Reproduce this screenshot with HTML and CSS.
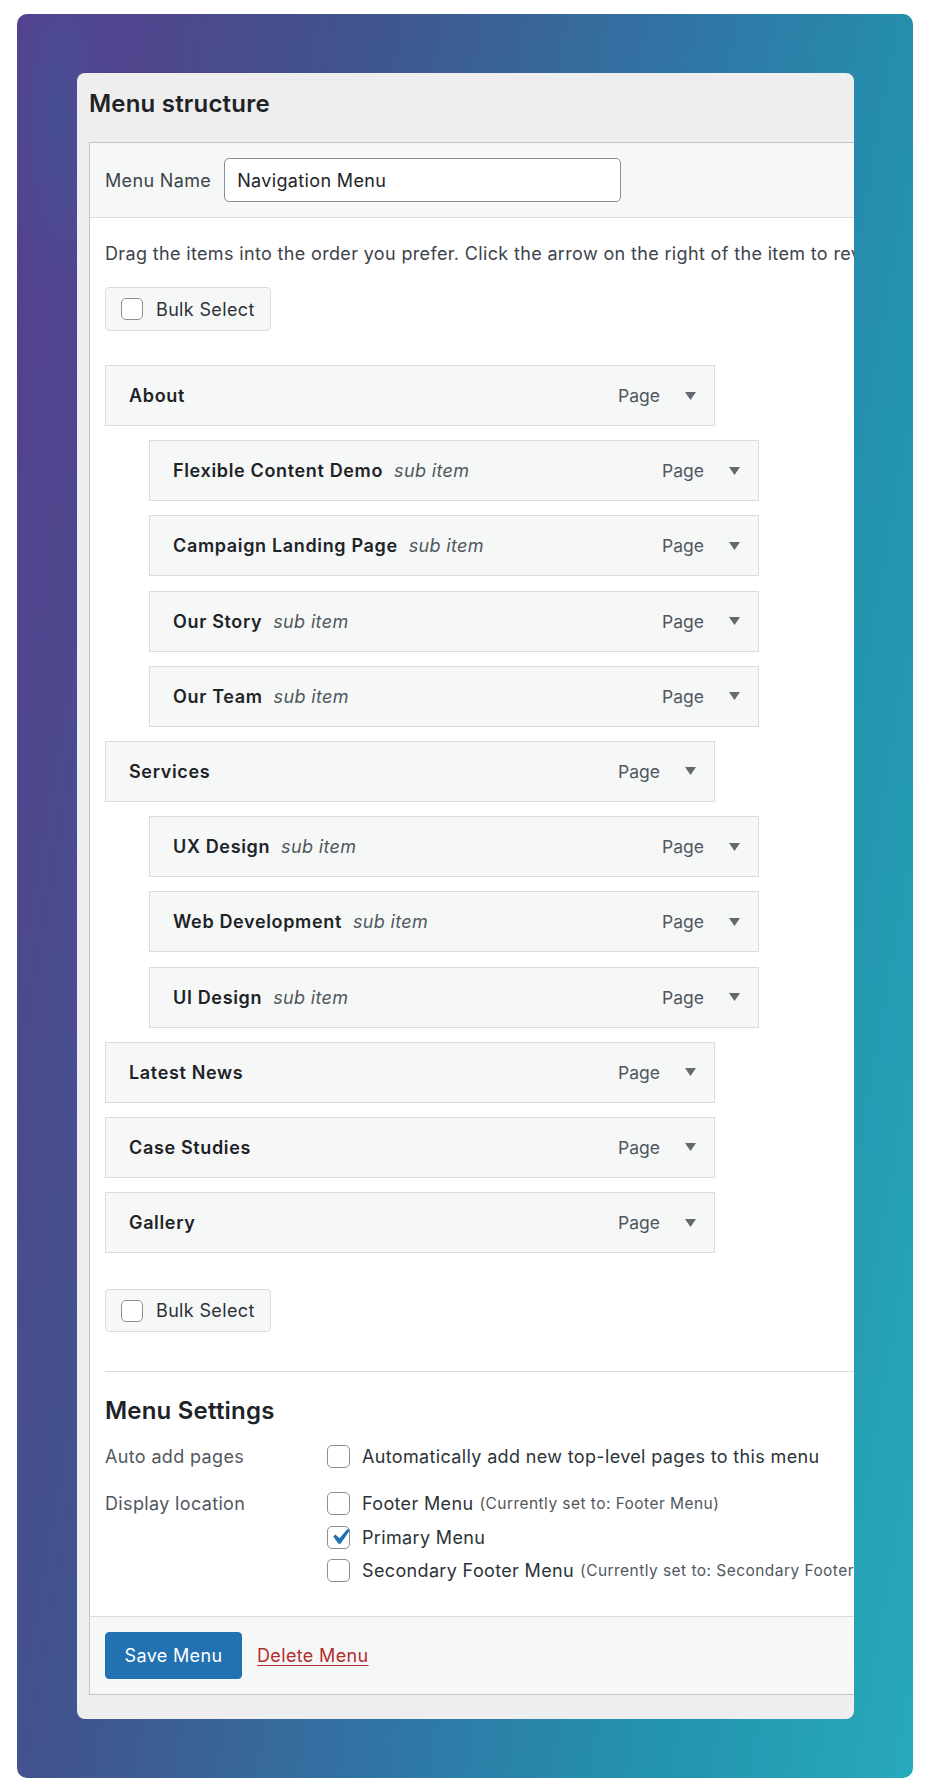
FILE: index.html
```html
<!DOCTYPE html>
<html lang="en">
<head>
<meta charset="utf-8">
<title>Menu structure</title>
<link rel="stylesheet" href="styles.css">
</head>
<body>
<div class="frame">
  <div class="card">
    <h2 class="card-title">Menu structure</h2>
    <div class="panel">
      <div class="panel-head">
        <label class="name-label" for="menu-name">Menu Name</label>
        <input class="name-input" id="menu-name" type="text" value="Navigation Menu">
      </div>
      <div class="panel-body">
        <p class="intro">Drag the items into the order you prefer. Click the arrow on the right of the item to reveal additional configuration options.</p>
        <div class="bulk"><span class="cb"></span><span>Bulk Select</span></div>

        <ul class="items">
          <li class="item"><span class="item-title">About</span><span class="item-type">Page</span><svg class="arrow" viewBox="0 0 11 8"><polygon points="0,0 11,0 5.5,8"/></svg></li>
          <li class="item sub"><span class="item-title">Flexible Content Demo</span><span class="item-note">sub item</span><span class="item-type">Page</span><svg class="arrow" viewBox="0 0 11 8"><polygon points="0,0 11,0 5.5,8"/></svg></li>
          <li class="item sub"><span class="item-title">Campaign Landing Page</span><span class="item-note">sub item</span><span class="item-type">Page</span><svg class="arrow" viewBox="0 0 11 8"><polygon points="0,0 11,0 5.5,8"/></svg></li>
          <li class="item sub"><span class="item-title">Our Story</span><span class="item-note">sub item</span><span class="item-type">Page</span><svg class="arrow" viewBox="0 0 11 8"><polygon points="0,0 11,0 5.5,8"/></svg></li>
          <li class="item sub"><span class="item-title">Our Team</span><span class="item-note">sub item</span><span class="item-type">Page</span><svg class="arrow" viewBox="0 0 11 8"><polygon points="0,0 11,0 5.5,8"/></svg></li>
          <li class="item"><span class="item-title">Services</span><span class="item-type">Page</span><svg class="arrow" viewBox="0 0 11 8"><polygon points="0,0 11,0 5.5,8"/></svg></li>
          <li class="item sub"><span class="item-title">UX Design</span><span class="item-note">sub item</span><span class="item-type">Page</span><svg class="arrow" viewBox="0 0 11 8"><polygon points="0,0 11,0 5.5,8"/></svg></li>
          <li class="item sub"><span class="item-title">Web Development</span><span class="item-note">sub item</span><span class="item-type">Page</span><svg class="arrow" viewBox="0 0 11 8"><polygon points="0,0 11,0 5.5,8"/></svg></li>
          <li class="item sub"><span class="item-title">UI Design</span><span class="item-note">sub item</span><span class="item-type">Page</span><svg class="arrow" viewBox="0 0 11 8"><polygon points="0,0 11,0 5.5,8"/></svg></li>
          <li class="item"><span class="item-title">Latest News</span><span class="item-type">Page</span><svg class="arrow" viewBox="0 0 11 8"><polygon points="0,0 11,0 5.5,8"/></svg></li>
          <li class="item"><span class="item-title">Case Studies</span><span class="item-type">Page</span><svg class="arrow" viewBox="0 0 11 8"><polygon points="0,0 11,0 5.5,8"/></svg></li>
          <li class="item"><span class="item-title">Gallery</span><span class="item-type">Page</span><svg class="arrow" viewBox="0 0 11 8"><polygon points="0,0 11,0 5.5,8"/></svg></li>
        </ul>

        <div class="bulk bulk-bottom"><span class="cb"></span><span>Bulk Select</span></div>

        <div class="settings">
          <h3 class="settings-title">Menu Settings</h3>
          <div class="setting-row">
            <div class="setting-label">Auto add pages</div>
            <div class="setting-opts">
              <div class="opt"><span class="cb"></span><span>Automatically add new top-level pages to this menu</span></div>
            </div>
          </div>
          <div class="setting-row">
            <div class="setting-label">Display location</div>
            <div class="setting-opts">
              <div class="opt"><span class="cb"></span><span>Footer Menu</span><span class="opt-note">(Currently set to: Footer Menu)</span></div>
              <div class="opt"><span class="cb checked"><svg viewBox="0 0 20 20"><path d="M14.83 4.89l1.34.94-5.81 8.38H9.02L5.78 9.67l1.34-1.25 2.57 2.4z"/></svg></span><span>Primary Menu</span></div>
              <div class="opt"><span class="cb"></span><span>Secondary Footer Menu</span><span class="opt-note">(Currently set to: Secondary Footer Menu)</span></div>
            </div>
          </div>
        </div>
      </div>
      <div class="panel-foot">
        <button class="save" type="button">Save Menu</button>
        <a class="delete" href="#">Delete Menu</a>
      </div>
    </div>
  </div>
</div>
</body>
</html>
```

FILE: styles.css
```css
* { box-sizing: border-box; }

html, body {
  margin: 0;
  padding: 0;
  background: #ffffff;
}

body {
  font-family: Inter, "Noto Sans", "Liberation Sans", sans-serif;
  font-size: 18px;
  letter-spacing: 0.35px;
  color: #1d2327;
}

.frame {
  margin: 14px 0 0 17px;
  width: 896px;
  height: 1764px;
  border-radius: 10px;
  padding: 59px 59px 59px 60px;
  background:
    radial-gradient(ellipse 60px 200px at 40px 100px, rgba(60, 90, 150, 0.55), rgba(60, 90, 150, 0) 100%),
    linear-gradient(100deg, #583e8e 0%, #40558f 30%, #2f78a6 58%, #2393ae 78%, #28a9bb 100%);
}

.card {
  width: 777px;
  height: 1646px;
  background: #eeeeee;
  border-radius: 8px;
  overflow: hidden;
  padding: 0 0 23px 12px;
}

.card-title {
  margin: 0;
  padding: 17px 0 24px 0;
  font-size: 24px;
  line-height: 28px;
  letter-spacing: 0.2px;
  font-weight: 600;
  color: #1d2327;
  white-space: nowrap;
}

.panel {
  width: 840px;
  background: #ffffff;
  border: 1px solid #c3c4c7;
}

.panel-head {
  display: flex;
  align-items: center;
  height: 75px;
  padding: 0 15px;
  background: #f6f7f7;
  border-bottom: 1px solid #dcdcde;
}

.name-label {
  color: #3c434a;
  margin-right: 13px;
}

.name-input {
  width: 397px;
  height: 44px;
  border: 1px solid #8c8f94;
  border-radius: 5px;
  padding: 0 12px;
  font: inherit;
  letter-spacing: 0.35px;
  color: #1d2327;
  background: #ffffff;
}

.panel-body {
  padding: 23px 15px 34px 15px;
}

.intro {
  margin: 0 0 20px 0;
  line-height: 26px;
  color: #3c434a;
  white-space: nowrap;
}

.bulk {
  display: inline-flex;
  align-items: center;
  gap: 13px;
  height: 44px;
  width: 166px;
  padding: 0 15px;
  background: #f6f7f7;
  border: 1px solid #dcdcde;
  border-radius: 4px;
  color: #2c3338;
  white-space: nowrap;
}

.bulk-bottom {
  margin-top: 36px;
  height: 43px;
}

.cb {
  flex: none;
  display: inline-flex;
  align-items: center;
  justify-content: center;
  width: 22px;
  height: 22px;
  border: 1px solid #8c8f94;
  border-radius: 5px;
  background: #ffffff;
  overflow: visible;
}

.cb svg {
  flex: none;
  width: 32px;
  height: 32px;
  margin: 0 -5px 0 -3px;
  fill: #2271b1;
}

.items {
  list-style: none;
  margin: 34px 0 0 0;
  padding: 0;
  display: flex;
  flex-direction: column;
  gap: 14.2px;
}

.item {
  display: flex;
  align-items: center;
  width: 610px;
  height: 61px;
  padding: 0 18px 0 23px;
  background: #f6f7f7;
  border: 1px solid #dcdcde;
  white-space: nowrap;
}

.item.sub {
  margin-left: 44px;
}

.item-title {
  font-weight: 600;
  letter-spacing: 0.65px;
  color: #1d2327;
}

.item-note {
  margin-left: 11px;
  font-style: italic;
  font-size: 18px;
  color: #50575e;
}

.item-type {
  margin-left: auto;
  font-size: 17.5px;
  letter-spacing: 0;
  color: #50575e;
}

.arrow {
  flex: none;
  width: 11px;
  height: 8px;
  margin-left: 25px;
  fill: #646970;
}

.settings {
  margin-top: 39px;
  border-top: 1px solid #dcdcde;
}

.settings-title {
  margin: 24px 0 19px 0;
  font-size: 24px;
  line-height: 30px;
  letter-spacing: 0.2px;
  font-weight: 600;
  color: #1d2327;
}

.setting-row {
  display: flex;
  margin-bottom: 24px;
}

.setting-row:last-child {
  margin-bottom: 0;
}

.setting-label {
  width: 222px;
  flex: none;
  line-height: 23px;
  color: #50575e;
}

.setting-opts {
  display: flex;
  flex-direction: column;
  gap: 10.5px;
}

.opt {
  display: flex;
  align-items: center;
  height: 23px;
  white-space: nowrap;
  color: #2c3338;
}

.opt .cb {
  width: 23px;
  height: 23px;
  margin-right: 12px;
}

.opt-note {
  margin-left: 6px;
  font-size: 15.5px;
  letter-spacing: 0.45px;
  color: #50575e;
}

.panel-foot {
  display: flex;
  align-items: center;
  gap: 15px;
  padding: 15px;
  background: #f6f7f7;
  border-top: 1px solid #dcdcde;
}

.save {
  height: 47px;
  width: 137px;
  padding: 0;
  font: inherit;
  letter-spacing: 0.35px;
  color: #ffffff;
  background: #2271b1;
  border: 1px solid #2271b1;
  border-radius: 4px;
}

.delete {
  color: #b32d2e;
  text-decoration: underline;
  text-underline-offset: 3px;
}
```
